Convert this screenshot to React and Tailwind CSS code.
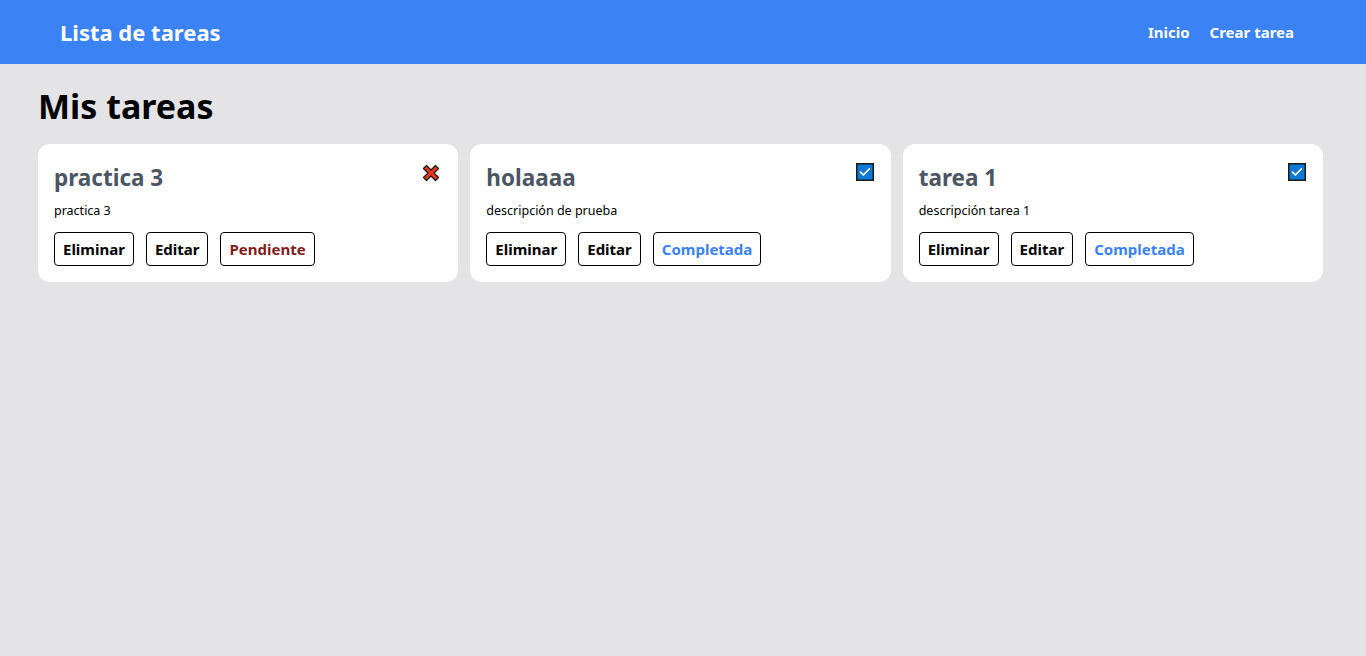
import React from 'react';

const tareas = [
  { id: 3, titulo: 'practica 3', descripcion: 'practica 3', completada: false },
  { id: 2, titulo: 'holaaaa', descripcion: 'descripción de prueba', completada: true },
  { id: 1, titulo: 'tarea 1', descripcion: 'descripción tarea 1', completada: true },
];

function IconX() {
  return (
    <svg width="20" height="20" viewBox="0 0 20 20">
      <path d="M2.5 5.5 5.5 2.5 10 7 14.5 2.5 17.5 5.5 13 10 17.5 14.5 14.5 17.5 10 13 5.5 17.5 2.5 14.5 7 10Z"
        fill="#e8361f" stroke="#1a1a1a" strokeWidth="1.3" strokeLinejoin="round" />
    </svg>
  );
}

function IconCheck() {
  return (
    <svg width="18" height="18" viewBox="0 0 18 18">
      <rect x="0.75" y="0.75" width="16.5" height="16.5" fill="#0b78d6" stroke="#1a1a1a" strokeWidth="1.5" />
      <path d="M4.5 9.2 7.4 12 13.4 5.8" fill="none" stroke="#fff" strokeWidth="1.7" strokeLinecap="round" strokeLinejoin="round" />
    </svg>
  );
}

function Tarea({ t }) {
  return (
    <div className="bg-white rounded-xl px-4 pt-[18px] pb-4">
      <div className="flex items-start justify-between">
        <h3 className="text-[22.5px] font-bold text-[#4b5563] leading-8">{t.titulo}</h3>
        <div className="pt-[1px] pr-[1px]">{t.completada ? <IconCheck /> : <IconX />}</div>
      </div>
      <p className="text-[12.5px] text-black mt-[8px]">{t.descripcion}</p>
      <div className="flex gap-3 mt-[11px]">
        <button className="h-[34px] px-2 border border-black rounded text-[15px] font-bold text-black">Eliminar</button>
        <button className="h-[34px] px-2 border border-black rounded text-[15px] font-bold text-black">Editar</button>
        {t.completada ? (
          <button className="h-[34px] px-2 border border-black rounded text-[15px] font-bold text-[#3b82f6]">Completada</button>
        ) : (
          <button className="h-[34px] px-2 border border-black rounded text-[15px] font-bold text-[#7f1d1d]">Pendiente</button>
        )}
      </div>
    </div>
  );
}

export default function App() {
  return (
    <div className="min-h-[656px] bg-[#e4e4e7]" style={{ fontFamily: '"Noto Sans", "Open Sans", sans-serif' }}>
      <nav className="h-16 bg-[#3b82f6] flex items-center justify-between pl-[60px] pr-[72px]">
        <h1 className="text-[22px] font-bold text-white">Lista de tareas</h1>
        <div className="flex gap-5 text-[15px] text-white font-bold">
          <a href="#">Inicio</a>
          <a href="#">Crear tarea</a>
        </div>
      </nav>
      <main className="pl-[38px] pr-[43px] pt-[22px]">
        <h2 className="text-[34px] leading-10 font-bold text-black mb-[18px]">Mis tareas</h2>
        <div className="grid grid-cols-3 gap-3">
          {tareas.map((t) => <Tarea key={t.id} t={t} />)}
        </div>
      </main>
    </div>
  );
}
